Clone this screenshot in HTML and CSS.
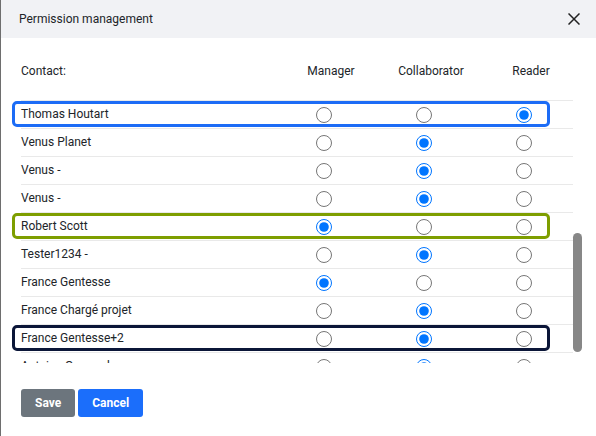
FILE: index.html
```html
<!DOCTYPE html>
<html>
<head>
<meta charset="utf-8">
<link rel="stylesheet" href="styles.css">
</head>
<body>
<div class="dialog">
  <div class="header">
    <span class="title">Permission management</span>
    <svg class="close" width="12" height="12" viewBox="0 0 12 12"><path d="M0.5 0.5L11.5 11.5M11.5 0.5L0.5 11.5" stroke="#222" stroke-width="1.5" fill="none"/></svg>
  </div>
  <div class="content">
    <div class="thead">
      <span class="th-contact">Contact:</span>
      <span class="th">Manager</span>
      <span class="th">Collaborator</span>
      <span class="th">Reader</span>
    </div>
    <div class="list-wrap">
      <div class="list">
        <div class="row hl-blue"><span class="name">Thomas Houtart</span><span class="cell"><input type="radio" name="r1"></span><span class="cell"><input type="radio" name="r1"></span><span class="cell"><input type="radio" name="r1" checked></span></div>
        <div class="row"><span class="name">Venus Planet</span><span class="cell"><input type="radio" name="r2"></span><span class="cell"><input type="radio" name="r2" checked></span><span class="cell"><input type="radio" name="r2"></span></div>
        <div class="row"><span class="name">Venus -</span><span class="cell"><input type="radio" name="r3"></span><span class="cell"><input type="radio" name="r3" checked></span><span class="cell"><input type="radio" name="r3"></span></div>
        <div class="row"><span class="name">Venus -</span><span class="cell"><input type="radio" name="r4"></span><span class="cell"><input type="radio" name="r4" checked></span><span class="cell"><input type="radio" name="r4"></span></div>
        <div class="row hl-green"><span class="name">Robert Scott</span><span class="cell"><input type="radio" name="r5" checked></span><span class="cell"><input type="radio" name="r5"></span><span class="cell"><input type="radio" name="r5"></span></div>
        <div class="row"><span class="name">Tester1234 -</span><span class="cell"><input type="radio" name="r6"></span><span class="cell"><input type="radio" name="r6" checked></span><span class="cell"><input type="radio" name="r6"></span></div>
        <div class="row"><span class="name">France Gentesse</span><span class="cell"><input type="radio" name="r7" checked></span><span class="cell"><input type="radio" name="r7"></span><span class="cell"><input type="radio" name="r7"></span></div>
        <div class="row"><span class="name">France Chargé projet</span><span class="cell"><input type="radio" name="r8"></span><span class="cell"><input type="radio" name="r8" checked></span><span class="cell"><input type="radio" name="r8"></span></div>
        <div class="row hl-navy"><span class="name">France Gentesse+2</span><span class="cell"><input type="radio" name="r9"></span><span class="cell"><input type="radio" name="r9" checked></span><span class="cell"><input type="radio" name="r9"></span></div>
        <div class="row"><span class="name">Antoine Gaspard</span><span class="cell"><input type="radio" name="r10"></span><span class="cell"><input type="radio" name="r10" checked></span><span class="cell"><input type="radio" name="r10"></span></div>
      </div>
      <div class="track"><div class="thumb"></div></div>
    </div>
    <div class="actions">
      <button class="btn btn-save">Save</button>
      <button class="btn btn-cancel">Cancel</button>
    </div>
  </div>
</div>
</body>
</html>
```

FILE: styles.css
```css
* { box-sizing: border-box; }
html, body { margin: 0; padding: 0; background: #fff; }
body {
  font-family: Roboto, "Liberation Sans", Arial, sans-serif;
  font-size: 12px;
  color: #212529;
}
.dialog {
  width: 596px;
  height: 436px;
  border-left: 1px solid #6e6e6e;
  background: #fff;
  overflow: hidden;
}
.header {
  height: 38px;
  background: #f1f2f5;
  display: flex;
  align-items: center;
  justify-content: space-between;
  padding: 0 16px 0 18px;
}
.title { font-size: 12px; color: #212529; }
.close { display: block; }
.content { padding-left: 11px; }
.thead {
  display: grid;
  grid-template-columns: 260px 100px 100px 100px;
  margin: 25px 0 21px 9px;
  height: 16px;
  line-height: 16px;
}
.th { text-align: center; }
.list-wrap { display: flex; }
.list {
  width: 561px;
  height: 263px;
  overflow: hidden;
  padding-left: 9px;
}
.row {
  position: relative;
  display: grid;
  grid-template-columns: 1fr 100px 100px 99px;
  align-items: center;
  height: 28px;
  border-top: 1px solid #e9e9e9;
}
.name { line-height: 27px; }
.cell { display: flex; justify-content: center; align-items: center; }
.cell input {
  width: 16px;
  height: 16px;
  margin: 0;
}
.hl-blue::after, .hl-green::after, .hl-navy::after {
  content: "";
  position: absolute;
  left: -9px;
  right: 23px;
  top: 0;
  bottom: 1px;
  border: 3px solid;
  border-radius: 5px;
  pointer-events: none;
}
.hl-blue::after { border-color: #1c6cf6; }
.hl-green::after { border-color: #7e9e00; }
.hl-navy::after { border-color: #0b1638; }
.track { width: 9px; }
.thumb {
  margin-top: 133px;
  width: 9px;
  height: 119px;
  background: #878787;
  border-radius: 4.5px;
}
.actions {
  display: flex;
  gap: 3px;
  margin: 26px 0 0 9px;
}
.btn {
  height: 28px;
  border: none;
  border-radius: 3px;
  color: #fff;
  font-family: Roboto, "Liberation Sans", Arial, sans-serif;
  font-size: 12px;
  font-weight: 700;
  padding: 0 14px;
}
.btn-save { background: #6c757d; }
.btn-cancel { background: #1b6efb; }
```
